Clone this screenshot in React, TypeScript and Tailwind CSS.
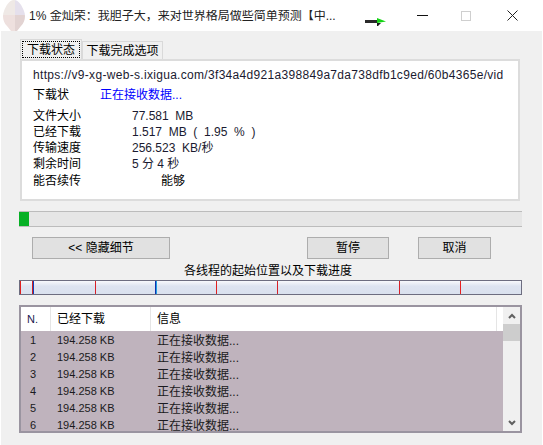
import React from "react";

const ticks = [
  { x: 0, color: "#e02020", wide: false },
  { x: 12, color: "linear-gradient(to right, #d02020 50%, #1040c0 50%)", wide: true },
  { x: 75, color: "#d82028", wide: false },
  { x: 135, color: "linear-gradient(to right, #1030b0 50%, #20a0e0 50%)", wide: true },
  { x: 196, color: "#e02020", wide: false },
  { x: 257, color: "#d82028", wide: false },
  { x: 379, color: "#d82028", wide: false },
  { x: 440, color: "#e82020", wide: false },
];

const infoRows = [
  ["文件大小", "77.581  MB"],
  ["已经下载", "1.517  MB  (  1.95  %  )"],
  ["传输速度", "256.523  KB/秒"],
  ["剩余时间", "5 分 4 秒"],
];

function PieIcon() {
  return (
    <svg width="24" height="31" viewBox="0 0 24 31" className="flex-none">
      <defs>
        <clipPath id="drop">
          <path d="M12 0 C17 0 20 6 22 11 C24 16 23 22 19 26 L15 31 L9 31 L5 26 C1 22 0 16 2 11 C4 6 7 0 12 0 Z" />
        </clipPath>
      </defs>
      <g clipPath="url(#drop)">
        <rect x="0" y="0" width="13" height="15" fill="#efe9e6" />
        <rect x="13" y="0" width="11" height="15" fill="#e5e0ec" />
        <rect x="0" y="15" width="13" height="16" fill="#eee0de" />
        <rect x="13" y="15" width="11" height="16" fill="#e2d3d2" />
      </g>
    </svg>
  );
}

function Btn({ label, className }: { label: string; className: string }) {
  return (
    <div className={"h-[22px] flex items-center justify-center bg-[#e1e1e1] border border-[#adadad] text-[12px] text-black " + className}>
      {label}
    </div>
  );
}

export default function App() {
  return (
    <div className="w-[543px] h-[445px] bg-white overflow-hidden flex flex-col text-[12px] leading-none text-black font-['Liberation_Sans','Noto_Sans_CJK_SC',sans-serif]">
      {/* Title bar */}
      <div className="h-[31px] flex-none flex items-center pl-[2px]">
        <PieIcon />
        <span className="ml-[3px] w-[336px] text-[12px] text-[#222] whitespace-nowrap overflow-hidden">1% 金灿荣：我胆子大，来对世界格局做些简单预测【中...</span>
        <svg width="22" height="8" viewBox="0 0 22 8" className="flex-none mt-[13px]">
          <rect x="0" y="2" width="13" height="3" fill="#2a2a2a" />
          <path d="M12 0 L21 3.5 L12 5 Z" fill="#14d414" />
          <path d="M12 5 L16 5 L13 8 L12 8 Z" fill="#1a1a1a" />
        </svg>
        <svg width="11" height="2" viewBox="0 0 11 2" className="flex-none ml-[30px]">
          <rect width="11" height="1" fill="#111" />
        </svg>
        <div className="flex-none w-[10px] h-[10px] border border-[#cfcfcf] ml-[33px]" />
        <svg width="11" height="11" viewBox="0 0 11 11" className="flex-none ml-[36px]">
          <path d="M0.5 0.5 L10.5 10.5 M10.5 0.5 L0.5 10.5" stroke="#222" strokeWidth="1" fill="none" />
        </svg>
      </div>

      {/* Client area */}
      <div className="flex-1 ml-[1px] w-[541px] bg-[#f0f0f0] pl-[18px] flex flex-col">
        {/* Tabs */}
        <div className="flex items-end h-[28px] ml-[1px]">
          <div className="w-[62px] h-[20px] bg-[#f0f0f0] border border-[#d9d9d9] border-b-0 flex items-center justify-center p-[1px]">
            <span className="w-full h-full flex items-center justify-center border border-dotted border-black text-[12px]">下载状态</span>
          </div>
          <div className="w-[81px] h-[18px] bg-[#f0f0f0] border border-[#d9d9d9] border-b-0 flex items-center justify-center text-[12px]">下载完成选项</div>
        </div>
        {/* Details panel */}
        <div className="w-[500px] h-[142px] ml-[1px] bg-white border-2 border-[#dcdcdc] pt-[4px] pl-[11px] text-[12px]">
          <div className="h-[20px] flex items-center whitespace-nowrap text-[#1a1a30] tracking-[0.31px]">https://v9-xg-web-s.ixigua.com/3f34a4d921a398849a7da738dfb1c9ed/60b4365e/vid</div>
          <div className="h-[19px] flex items-center">
            <span className="w-[67px]">下载状</span>
            <span className="text-[#0000ff]">正在接收数据...</span>
          </div>
          <div className="mt-[4px] flex flex-col">
            {infoRows.map((row) => (
              <div key={row[0]} className="h-[16px] flex items-center">
                <span className="w-[99px] flex-none">{row[0]}</span>
                <span className="whitespace-pre text-[#1a1a30]">{row[1]}</span>
              </div>
            ))}
            <div className="h-[16px] mt-[1px] flex items-center">
              <span className="w-[128px] flex-none">能否续传</span>
              <span>能够</span>
            </div>
          </div>
        </div>

        {/* Overall progress */}
        <div className="w-[503px] h-[16px] mt-[10px] bg-[#e6e6e6] border-y border-[#bcbcbc]">
          <div className="w-[10px] h-full bg-[#06b025]" />
        </div>

        {/* Buttons */}
        <div className="flex mt-[10px]">
          <Btn label="<< 隐藏细节" className="w-[138px] ml-[13px]" />
          <Btn label="暂停" className="w-[82px] ml-[137px]" />
          <Btn label="取消" className="w-[73px] ml-[29px]" />
        </div>
        <div className="w-[498px] mt-[4px] h-[16px] flex items-center justify-center text-[12px]">各线程的起始位置以及下载进度</div>

        {/* Thread progress */}
        <div className="relative w-[503px] h-[15px] mt-[1px] border border-[#6d6d80] bg-gradient-to-b from-[#f8f9fc] via-[#dde3f0] via-40% to-[#dae1ee]">
          {ticks.map((t) => (
            <div key={t.x} className={"absolute top-0 bottom-0 " + (t.wide ? "w-[2px]" : "w-px")} style={{ left: t.x, background: t.color }} />
          ))}
        </div>

        {/* Thread list */}
        <div className="w-[503px] h-[128px] mt-[10px] border-2 border-[#9a94a0] bg-white flex overflow-hidden">
          <div className="flex-1 flex flex-col min-w-0">
            <div className="h-[24px] flex-none flex items-center text-[12px] border-r border-[#e5e5e5] mr-[6px]">
              <span className="w-[30px] h-full pl-[6px] flex items-center border-r border-[#e5e5e5] text-[#1a1a50] text-[11px]">N.</span>
              <span className="w-[100px] h-full pl-[6px] flex items-center border-r border-[#e5e5e5]">已经下载</span>
              <span className="pl-[6px]">信息</span>
            </div>
            <div className="flex-1 bg-[#bfb3bd] pt-[1px]">
              {[1, 2, 3, 4, 5, 6].map((n) => (
                <div key={n} className="h-[17px] flex items-center text-[#1a1a20] text-[11px]">
                  <span className="w-[30px] pl-[9px]">{n}</span>
                  <span className="w-[100px] pl-[6px] whitespace-pre">194.258 KB</span>
                  <span className="pl-[6px] text-[12px]">正在接收数据...</span>
                </div>
              ))}
            </div>
          </div>
          {/* Scrollbar */}
          <div className="w-[17px] flex-none bg-[#f0f0f0] flex flex-col items-center">
            <div className="h-[17px] flex-none flex items-center justify-center">
              <svg width="8" height="6" viewBox="0 0 8 6"><path d="M1 5 L4 2 L7 5" stroke="#606060" strokeWidth="2" fill="none" /></svg>
            </div>
            <div className="h-[17px] w-full flex-none bg-[#cdcdcd]" />
            <div className="flex-1" />
            <div className="h-[17px] flex-none flex items-center justify-center">
              <svg width="8" height="6" viewBox="0 0 8 6"><path d="M1 1 L4 4 L7 1" stroke="#606060" strokeWidth="2" fill="none" /></svg>
            </div>
          </div>
        </div>
      </div>
    </div>
  );
}
